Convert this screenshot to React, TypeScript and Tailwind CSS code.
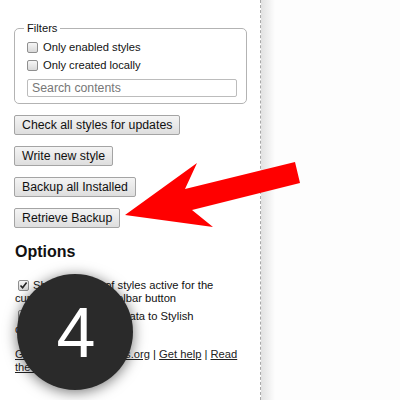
import React from "react";

const Box: React.FC<{ checked?: boolean; className?: string }> = ({ checked, className }) => (
    <span
        className={
            "inline-flex items-center justify-center w-[11px] h-[11px] border border-[#8f8f8f] rounded-[2px] bg-gradient-to-b from-[#f6f6f6] to-[#d9d9d9] align-[-1px] " +
            (className ?? "")
        }
    >
        {checked && (
            <svg width="9" height="9" viewBox="0 0 9 9">
                <path d="M1.5 4.5 L3.6 6.8 L7.6 1.6" fill="none" stroke="#222" strokeWidth="1.6" />
            </svg>
        )}
    </span>
);

const Btn: React.FC<{ label: string }> = ({ label }) => (
    <div className="flex">
        <button className="h-[20px] px-[7px] border border-[#a4a4a4] rounded-[2px] bg-gradient-to-b from-[#f4f4f4] to-[#dedede] text-[12.3px] leading-[18px] text-[#111]">
            {label}
        </button>
    </div>
);

export default function App() {
    return (
        <div
            className="relative w-[400px] h-[400px] overflow-hidden bg-white text-[#111] flex"
            style={{ fontFamily: '"Liberation Sans", Arial, sans-serif' }}
        >
            {/* left panel */}
            <div className="w-[261px] shrink-0 pl-[14px] pr-[14px] border-r border-dashed border-[#a8a8a8]">
                <h1 className="text-[22px] font-bold leading-[26px] mt-[-22px] text-[#222]">Installed</h1>

                <fieldset className="mt-[17px] w-[233px] border border-[#b3b3b3] rounded-[5px] pl-[12px] pb-[4px] pt-0">
                    <legend className="text-[11.2px] px-[3px] ml-[-3px] leading-[14px]">Filters</legend>
                    <label className="flex items-center gap-[5px] text-[11.2px] h-[18px] mt-[3px]">
                        <Box /> Only enabled styles
                    </label>
                    <label className="flex items-center gap-[5px] text-[11.2px] h-[18px]">
                        <Box /> Only created locally
                    </label>
                    <input
                        placeholder="Search contents"
                        className="mt-[5px] w-[210px] h-[18px] border border-[#bcbcbc] rounded-[2px] px-[4px] text-[12.3px] placeholder:text-[#777] outline-none"
                    />
                </fieldset>

                <div className="flex flex-col gap-[11px] mt-[11px]">
                    <Btn label="Check all styles for updates" />
                    <Btn label="Write new style" />
                    <Btn label="Backup all Installed" />
                    <Btn label="Retrieve Backup" />
                </div>

                <h2 className="text-[16px] font-bold leading-[20px] mt-[14px] pl-px">Options</h2>

                <div className="text-[11.2px] leading-[13px] mt-[17px] pl-px">
                    <p>
                        <Box checked className="ml-[3px] mr-[4px]" />
                        Show number of styles active for the current site on the toolbar button
                    </p>
                    <p className="mt-[5px]">
                        <Box className="ml-[3px] mr-[4px]" />
                        Send anonymous data to Stylish developers
                    </p>
                    <p className="mt-[12px]">
                        <a className="underline text-[#222]">Get styles at userstyles.org</a> |{" "}
                        <a className="underline text-[#222]">Get help</a> |{" "}
                        <a className="underline text-[#222]">Read the documentation</a>
                    </p>
                </div>
            </div>

            {/* right panel */}
            <div className="flex-1 flex bg-[#fdfdfd]">
                <div className="w-[14px] bg-gradient-to-r from-[#e2e2e2] to-[#fdfdfd]" />
            </div>

            {/* step badge */}
            <div className="absolute left-[17px] top-[274px] w-[116px] h-[116px] rounded-full bg-[#2a2a2a] shadow-[0_2px_14px_rgba(0,0,0,0.55)] flex items-center justify-center">
                <span className="text-white text-[70px] leading-none mt-[2px] ml-[2px]">4</span>
            </div>

            {/* arrow */}
            <svg className="absolute left-0 top-0" width="400" height="400" viewBox="0 0 400 400">
                <polygon
                    points="295,162 300,183 192,210 213,227 125,215 197,163 185,189"
                    fill="#ff0000"
                />
            </svg>
        </div>
    );
}
